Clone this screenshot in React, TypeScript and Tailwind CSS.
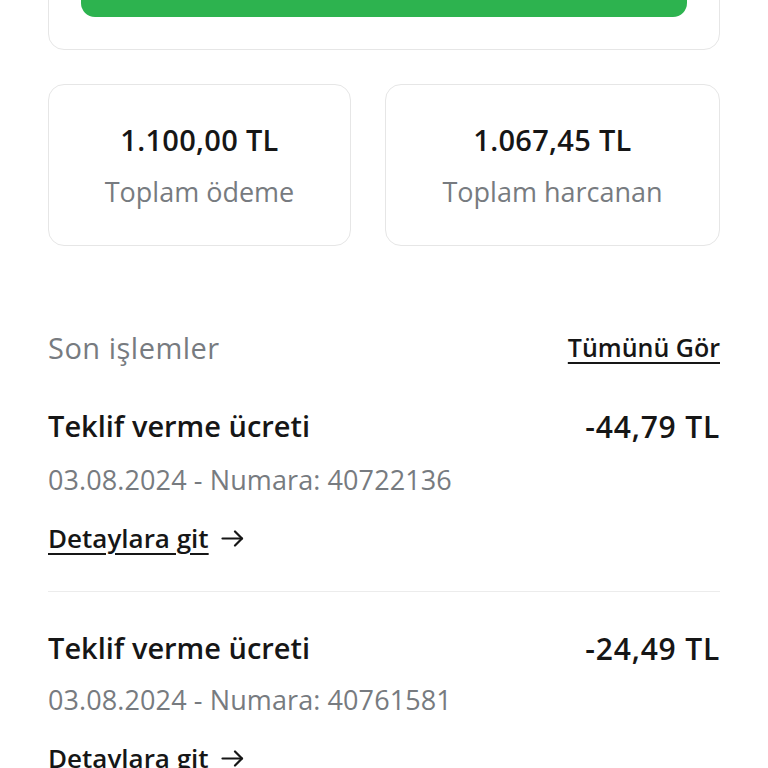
import React from "react";

const font = { fontFamily: "'Open Sans', 'Noto Sans', sans-serif" };

function Arrow() {
  return (
    <svg width="23" height="17" viewBox="0 0 23 17" fill="none" stroke="#161616" strokeWidth="2.2" strokeLinecap="round" strokeLinejoin="round">
      <path d="M1.5 8.5h19.5" />
      <path d="M14 1.5l7 7-7 7" />
    </svg>
  );
}

function Tx({ title, amount, meta, last }: { title: string; amount: string; meta: string; last?: boolean }) {
  return (
    <div className={last ? "pt-[36px]" : "pt-[38px] pb-[37px] border-b border-[#ececec]"}>
      <div className="flex items-center justify-between h-10">
        <span className="text-[29px] font-semibold text-[#161616]">{title}</span>
        <span className="text-[30px] font-semibold text-[#161616] tracking-[0.8px]">{amount}</span>
      </div>
      <div className={(last ? "mt-[14px]" : "mt-[16px]") + " h-9 flex items-center text-[27px] text-[#777b80] tracking-[0.1px]"}>{meta}</div>
      <div className="mt-[24px] h-8 flex items-center gap-[12px]">
        <span className="text-[26px] font-semibold text-[#161616] underline underline-offset-[5px] decoration-[1.5px]">Detaylara git</span>
        <Arrow />
      </div>
    </div>
  );
}

export default function App() {
  return (
    <div className="w-[768px] h-[768px] overflow-hidden bg-white px-12" style={font}>
      <div className="mt-[-72px] rounded-[16px] border border-[#e6e6e6] px-8 py-8">
        <div className="h-14 rounded-[14px] bg-[#2db34f]" />
      </div>
      <div className="mt-[34px] grid grid-cols-[303px_1fr] gap-[34px]">
        {[
          ["1.100,00 TL", "Toplam ödeme"],
          ["1.067,45 TL", "Toplam harcanan"],
        ].map(([v, l]) => (
          <div key={l} className="h-[162px] pt-[6px] rounded-[16px] border border-[#e6e6e6] flex flex-col items-center justify-center">
            <div className="h-10 flex items-center text-[29px] font-semibold text-[#161616] tracking-[0.3px] mt-[-6px]">{v}</div>
            <div className="mt-[15px] h-9 flex items-center text-[27px] text-[#777b80]">{l}</div>
          </div>
        ))}
      </div>
      <div className="mt-[82px] flex items-center justify-between h-10">
        <span className="text-[29px] text-[#777b80] tracking-[0.5px]">Son işlemler</span>
        <span className="text-[25px] font-semibold text-[#161616] underline underline-offset-[5px] decoration-[1.5px]">Tümünü Gör</span>
      </div>
      <Tx title="Teklif verme ücreti" amount="-44,79 TL" meta="03.08.2024 - Numara: 40722136" />
      <Tx title="Teklif verme ücreti" amount="-24,49 TL" meta="03.08.2024 - Numara: 40761581" last />
    </div>
  );
}
